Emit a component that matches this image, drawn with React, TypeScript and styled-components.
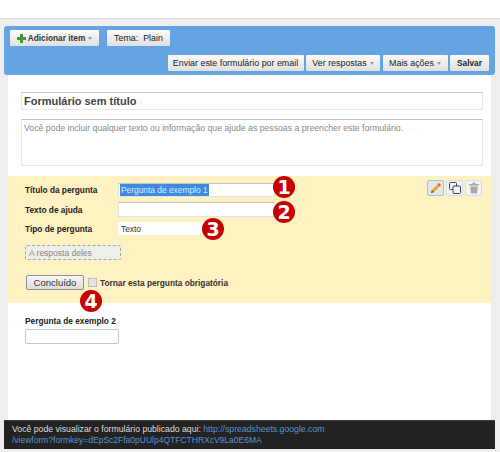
import styled, { createGlobalStyle } from "styled-components";

const GlobalStyle = createGlobalStyle`
  html, body {
    margin: 0;
    padding: 0;
    background: #fff;
  }
  * {
    box-sizing: border-box;
  }
`;

const PlusIcon = () => (
  <svg width="9" height="9" viewBox="0 0 10 10">
    <path d="M3.3 0h3.4v3.3H10v3.4H6.7V10H3.3V6.7H0V3.3h3.3z" fill="#3f9a35" />
  </svg>
);

const PencilIcon = () => (
  <svg width="12" height="12" viewBox="0 0 12 12">
    <path d="M8.8 1 11 3.2 4 10.2 1.8 8z" fill="#eda92b" />
    <path d="M8.8 1 11 3.2 9.8 4.4 7.6 2.2z" fill="#d9654a" />
    <path d="M1.8 8 4 10.2 1 11z" fill="#5a4a35" />
  </svg>
);

const CopyIcon = () => (
  <svg width="12" height="12" viewBox="0 0 12 12" fill="none" stroke="#444" strokeWidth="1">
    <rect x="0.5" y="0.5" width="7" height="7" rx="1" />
    <rect x="4" y="4" width="7.5" height="7.5" rx="1" fill="#f2f5f8" />
  </svg>
);

const TrashIcon = () => (
  <svg width="12" height="12" viewBox="0 0 12 12" fill="#a8a8a8">
    <path d="M4.5 0.5h3V2H11v1.6H1V2h3.5z" />
    <path d="M2.2 4.4h7.6L9 11.5H3z" />
  </svg>
);

const Caret = styled.i`
  display: inline-block;
  width: 0;
  height: 0;
  margin-left: 1px;
  border-left: 2.5px solid transparent;
  border-right: 2.5px solid transparent;
  border-top: 3px solid #999;
`;

const Page = styled.div`
  position: relative;
  width: 500px;
  height: 452px;
  overflow: hidden;
  display: flex;
  flex-direction: column;
  padding-top: 18px;
  background: #fff;
  font-family: "Liberation Sans", Arial, sans-serif;
  font-size: 8.7px;
  color: #222;
`;

const Shell = styled.div`
  flex: 1;
  display: flex;
  flex-direction: column;
  background: #eeeeee;
  border-top: 1px solid #dcdcdc;
  padding: 7px 5px 3px 4px;
`;

const Toolbar = styled.header`
  height: 49px;
  padding: 4px 6px;
  background: #64a4e3;
  border-radius: 3px;
  display: flex;
  flex-direction: column;
  justify-content: space-between;
`;

const ToolRow = styled.div<{ $end?: boolean }>`
  display: flex;
  align-items: center;
  justify-content: ${({ $end }) => ($end ? "flex-end" : "flex-start")};
  gap: ${({ $end }) => ($end ? "2.5px" : "8px")};
`;

const ToolButton = styled.button<{ $w: number; $strong?: boolean }>`
  width: ${({ $w }) => $w}px;
  height: 16px;
  padding: 0;
  display: inline-flex;
  align-items: center;
  justify-content: center;
  gap: 2px;
  border: 0;
  border-radius: 1px;
  background: linear-gradient(#fbfbfb, #e0e0e0);
  font-family: inherit;
  font-size: ${({ $strong }) => ($strong ? "8.3px" : "8.9px")};
  font-weight: ${({ $strong }) => ($strong ? 700 : 400)};
  color: #222;
  white-space: nowrap;
`;

const AddLabel = styled.span`
  font-size: 8.3px;
  font-weight: 700;
  color: #333;
`;

const Panel = styled.main`
  flex: 1;
  margin: 0 4px;
  background: #fff;
  display: flex;
  flex-direction: column;
`;

const FormHead = styled.div`
  padding: 17px 8px 10px 13px;
  display: flex;
  flex-direction: column;
  gap: 9px;
`;

const TitleBox = styled.div`
  height: 18px;
  padding-left: 2px;
  display: flex;
  align-items: center;
  border: 1px solid #e6e6e6;
  border-top-color: #c8c8c8;
  font-size: 11px;
  font-weight: 700;
  color: #444;
`;

const DescBox = styled.div`
  height: 47px;
  padding: 3px 2px;
  border: 1px solid #e6e6e6;
  border-top-color: #c4c4c4;
  font-size: 8.7px;
  color: #888;
  white-space: nowrap;
`;

const EditCard = styled.section`
  height: 127px;
  padding: 4px 9px 0 17px;
  background: #fef2c2;
  display: flex;
  justify-content: space-between;
  align-items: flex-start;
`;

const Fields = styled.div`
  padding-top: 3px;
  display: flex;
  flex-direction: column;
`;

const FieldRow = styled.div<{ $h: number }>`
  height: ${({ $h }) => $h}px;
  margin-bottom: 5px;
  display: flex;
  align-items: center;
`;

const FieldLabel = styled.label`
  width: 93px;
  font-size: 8.3px;
  font-weight: 700;
  color: #222;
`;

const FieldInput = styled.div<{ $w: number; $plain?: boolean }>`
  width: ${({ $w }) => $w}px;
  height: 100%;
  padding: 0 1px;
  display: flex;
  align-items: center;
  background: #fff;
  border: ${({ $plain }) => ($plain ? "0" : "1px solid #dfe3e6")};
  border-top-color: #bfc4c8;
  font-size: 8.4px;
  color: #333;
`;

const PlainValue = styled.span`
  padding-left: 2px;
`;

const Selected = styled.span`
  padding: 1px;
  background: #3f8be0;
  color: #dcecff;
`;

const AnswerHint = styled.div`
  width: 96px;
  height: 15px;
  margin-top: 5px;
  padding-left: 3px;
  display: flex;
  align-items: center;
  background: #efefe9;
  border: 1px dashed #a5a5a0;
  border-radius: 2px;
  font-size: 8.5px;
  color: #888;
`;

const DoneRow = styled.div`
  margin-top: 15px;
  margin-left: 1px;
  display: flex;
  align-items: center;
`;

const DoneButton = styled.button`
  width: 58px;
  height: 15px;
  padding: 0;
  background: linear-gradient(#f8f8f8, #dcdcdc);
  border: 1px solid #8f8f8f;
  border-radius: 2px;
  font-family: inherit;
  font-size: 9.5px;
  color: #333;
`;

const Check = styled.span`
  width: 9px;
  height: 9px;
  margin: 0 3px 0 4px;
  background: #e3e3e0;
  border: 1px solid #bbb;
`;

const CheckLabel = styled.span`
  font-size: 8.3px;
  font-weight: 700;
  color: #333;
  white-space: nowrap;
`;

const Tools = styled.div`
  display: flex;
  gap: 2px;
`;

const ToolIcon = styled.span<{ $active?: boolean }>`
  width: 17px;
  height: 16px;
  display: flex;
  align-items: center;
  justify-content: center;
  border: 1px solid ${({ $active }) => ($active ? "#a9c3dd" : "#d5dee6")};
  border-radius: 2px;
  background: ${({ $active }) => ($active ? "#dfe8ef" : "#f2f5f8")};
`;

const NextQuestion = styled.section`
  padding: 13px 0 0 17px;
`;

const NextLabel = styled.div`
  height: 12px;
  font-size: 8.3px;
  font-weight: 700;
  color: #222;
`;

const NextInput = styled.div`
  width: 94px;
  height: 15px;
  margin-top: 1px;
  background: #fff;
  border: 1px solid #c8c8c8;
  border-radius: 2px;
`;

const Notice = styled.footer`
  height: 29px;
  padding: 3px 8px;
  background: #222222;
  border-top: 1px solid #3a3a3a;
  font-size: 8.7px;
  line-height: 11px;
  color: #ddd;
  white-space: nowrap;
`;

const NoticeLink = styled.a<{ $small?: boolean }>`
  color: #5b93cf;
  font-size: ${({ $small }) => ($small ? "8.5px" : "8.7px")};
`;

const Badge = styled.span<{ $x: number; $y: number }>`
  position: absolute;
  left: ${({ $x }) => $x - 11}px;
  top: ${({ $y }) => $y - 11}px;
  width: 22px;
  height: 22px;
  display: flex;
  align-items: center;
  justify-content: center;
  border-radius: 50%;
  background: #c90000;
  font-family: "DejaVu Sans", sans-serif;
  font-size: 19px;
  font-weight: 700;
  line-height: 1;
  color: #fff;
`;

export default function App() {
  return (
    <>
      <GlobalStyle />
      <Page>
        <Shell>
          <Toolbar>
            <ToolRow>
              <ToolButton $w={89}>
                <PlusIcon />
                <AddLabel>Adicionar item</AddLabel>
                <Caret />
              </ToolButton>
              <ToolButton $w={63}>Tema:&nbsp; Plain</ToolButton>
            </ToolRow>
            <ToolRow $end>
              <ToolButton $w={136}>Enviar este formulário por email</ToolButton>
              <ToolButton $w={74}>
                Ver respostas
                <Caret />
              </ToolButton>
              <ToolButton $w={65}>
                Mais ações
                <Caret />
              </ToolButton>
              <ToolButton $w={39} $strong>
                Salvar
              </ToolButton>
            </ToolRow>
          </Toolbar>
          <Panel>
            <FormHead>
              <TitleBox>Formulário sem título</TitleBox>
              <DescBox>
                Você pode incluir qualquer texto ou informação que ajude as pessoas a preencher este formulário.
              </DescBox>
            </FormHead>
            <EditCard>
              <Fields>
                <FieldRow $h={14}>
                  <FieldLabel>Título da pergunta</FieldLabel>
                  <FieldInput $w={157}>
                    <Selected>Pergunta de exemplo 1</Selected>
                  </FieldInput>
                </FieldRow>
                <FieldRow $h={15}>
                  <FieldLabel>Texto de ajuda</FieldLabel>
                  <FieldInput $w={157} />
                </FieldRow>
                <FieldRow $h={13}>
                  <FieldLabel>Tipo de pergunta</FieldLabel>
                  <FieldInput $w={86} $plain>
                    <PlainValue>Texto</PlainValue>
                  </FieldInput>
                </FieldRow>
                <AnswerHint>A resposta deles</AnswerHint>
                <DoneRow>
                  <DoneButton>Concluído</DoneButton>
                  <Check />
                  <CheckLabel>Tornar esta pergunta obrigatória</CheckLabel>
                </DoneRow>
              </Fields>
              <Tools>
                <ToolIcon $active>
                  <PencilIcon />
                </ToolIcon>
                <ToolIcon>
                  <CopyIcon />
                </ToolIcon>
                <ToolIcon>
                  <TrashIcon />
                </ToolIcon>
              </Tools>
            </EditCard>
            <NextQuestion>
              <NextLabel>Pergunta de exemplo 2</NextLabel>
              <NextInput />
            </NextQuestion>
          </Panel>
          <Notice>
            Você pode visualizar o formulário publicado aqui:{" "}
            <NoticeLink>http://spreadsheets.google.com</NoticeLink>
            <br />
            <NoticeLink $small>/viewform?formkey=dEpSc2Ffa0pUUlp4QTFCTHRXcV9La0E6MA</NoticeLink>
          </Notice>
        </Shell>
        <Badge $x={284} $y={187}>1</Badge>
        <Badge $x={284} $y={212}>2</Badge>
        <Badge $x={213} $y={229}>3</Badge>
        <Badge $x={91} $y={301}>4</Badge>
      </Page>
    </>
  );
}
